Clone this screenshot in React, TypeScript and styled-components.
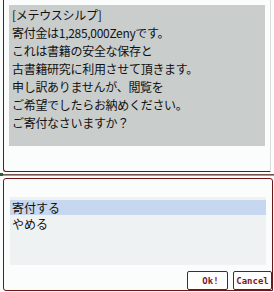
import styled, { createGlobalStyle } from "styled-components";

const GlobalStyle = createGlobalStyle`
  html, body {
    margin: 0;
    padding: 0;
    background: #fbfcfc;
  }
  body {
    font-family: "Noto Sans CJK JP", "Liberation Sans", sans-serif;
    color: #111;
  }
`;

const MAROON = "#6e1414";

const Page = styled.div`
  width: 274px;
  height: 292px;
  display: flex;
  flex-direction: column;
  overflow: hidden;
`;

const MessageFrame = styled.div`
  height: 172px;
  margin-left: 3px;
  margin-right: 3px;
  border-left: 1px solid ${MAROON};
  border-right: 1px solid #d8dcdc;
  border-bottom: 1px solid ${MAROON};
  border-bottom-left-radius: 3px;
  padding: 5px 4px 0 5px;
  box-sizing: border-box;
  background: #fbfcfc;
`;

const MessageBox = styled.div`
  width: 256px;
  height: 141px;
  background: #c9cdcc;
  padding: 1px 0 0 3px;
  box-sizing: border-box;
`;

const Line = styled.div`
  font-size: 12px;
  line-height: 18px;
  letter-spacing: -0.3px;
  white-space: nowrap;
`;

const Splitter = styled.div`
  height: 5px;
  display: flex;
  align-items: center;
`;

const SplitLine = styled.div`
  flex: 1;
  height: 2px;
  background: linear-gradient(#5a3030, #c9b8a8);
`;

const Knob = styled.div`
  width: 3px;
  height: 3px;
  background: #2f5a3a;
`;

const ChoiceFrame = styled.div`
  flex: 1;
  margin: 1px 1px 1px 3px;
  border: 1px solid ${MAROON};
  border-radius: 3px 3px 0 3px;
  padding: 18px 6px 0 6px;
  display: flex;
  flex-direction: column;
  background: #fbfcfc;
`;

const List = styled.div`
  height: 68px;
  background: #eff2f3;
  padding-top: 3px;
  box-sizing: border-box;
`;

const Choice = styled.div<{ $selected?: boolean }>`
  height: 15px;
  line-height: 15px;
  font-size: 12px;
  padding-left: 2px;
  background: ${(p) => (p.$selected ? "#c6d7ef" : "transparent")};
  margin-bottom: 1px;
`;

const ButtonRow = styled.div`
  margin-top: auto;
  display: flex;
  justify-content: flex-end;
  gap: 5px;
  margin-right: -6px;
`;

const Button = styled.div<{ $width: number }>`
  width: ${(p) => p.$width}px;
  height: 19px;
  box-sizing: border-box;
  border: 1px solid #3a3030;
  border-radius: 2px;
  background: #fff;
  display: flex;
  align-items: center;
  justify-content: center;
  padding-left: ${(p) => (p.$width > 40 ? 6 : 0)}px;
  font-family: "DejaVu Sans Mono", "Liberation Mono", monospace;
  font-size: 9px;
  font-weight: bold;
  color: #7a1a24;
  white-space: nowrap;
`;

const lines = [
  "[メテウスシルプ]",
  "寄付金は1,285,000Zenyです。",
  "これは書籍の安全な保存と",
  "古書籍研究に利用させて頂きます。",
  "申し訳ありませんが、閲覧を",
  "ご希望でしたらお納めください。",
  "ご寄付なさいますか？",
];

export default function App() {
  return (
    <Page>
      <GlobalStyle />
      <MessageFrame>
        <MessageBox>
          {lines.map((l) => (
            <Line key={l}>{l}</Line>
          ))}
        </MessageBox>
      </MessageFrame>
      <Splitter>
        <Knob />
        <SplitLine />
      </Splitter>
      <ChoiceFrame>
        <List>
          <Choice $selected>寄付する</Choice>
          <Choice>やめる</Choice>
        </List>
        <ButtonRow>
          <Button $width={41}>Ok!</Button>
          <Button $width={39}>Cancel</Button>
        </ButtonRow>
      </ChoiceFrame>
    </Page>
  );
}
